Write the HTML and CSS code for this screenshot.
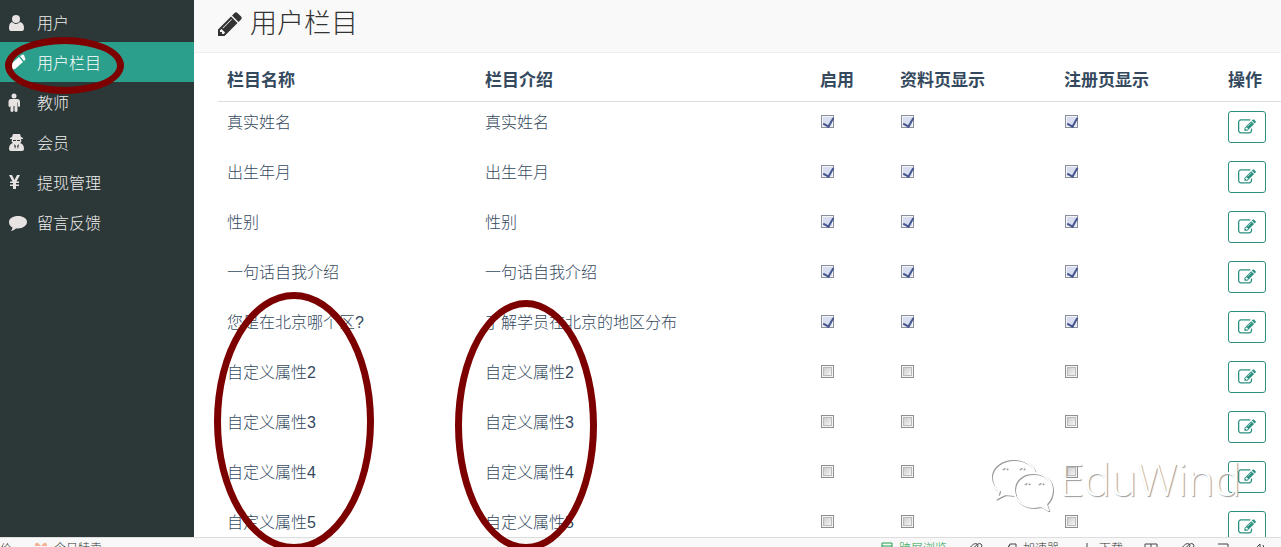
FILE: index.html
```html
<!DOCTYPE html>
<html lang="zh-CN">
<head>
    <meta charset="UTF-8">
    <meta name="viewport" content="width=device-width, initial-scale=1.0">
    <title>用户栏目</title>
    <link rel="stylesheet" href="styles.css">
</head>
<body>

    <svg class="sprite" aria-hidden="true">
        <symbol id="pencil" viewBox="0 0 1536 1536">
            <path d="M363 1408l91-91-235-235-91 91v107h128v128h107zM886 480q0-22-22-22-10 0-17 7l-542 542q-7 7-7 17 0 22 22 22 10 0 17-7l542-542q7-7 7-17zM832 288l416 416-832 832h-416v-416zM1515 384q0 53-37 90l-166 166-416-416 166-165q36-38 90-38 53 0 91 38l235 234q37 39 37 91z"/>
        </symbol>
        <symbol id="edit" viewBox="0 0 1792 1792">
            <path d="M888 1184l116-116-152-152-116 116v56h96v96h56zM1328 464q-16-16-33 1l-350 350q-17 17-1 33t33-1l350-350q17-17 1-33zM1408 1058v190q0 119-84.5 203.5t-203.5 84.5h-832q-119 0-203.5-84.5t-84.5-203.5v-832q0-119 84.5-203.5t203.5-84.5h832q63 0 117 25 15 7 18 23 3 17-9 29l-49 49q-14 14-32 8-23-6-45-6h-832q-66 0-113 47t-47 113v832q0 66 47 113t113 47h832q66 0 113-47t47-113v-126q0-13 9-22l64-64q15-15 35-7t20 29zM1312 320l288 288-672 672h-288v-288zM1756 452l-92 92-288-288 92-92q28-28 68-28t68 28l152 152q28 28 28 68t-28 68z"/>
        </symbol>
    </svg>

    <div class="app">
        <nav class="sidebar">
            <a href="#">
                <svg viewBox="0 0 20 20"><circle cx="8" cy="6" r="4"/><path d="M4 9q4 4 8 0 4 1 4 6 0 3-2 3H3q-2 0-2-3 0-5 3-6z"/></svg>
                用户
            </a>
            <a href="#" class="active">
                <svg viewBox="0 0 20 20"><path d="M2 17l1-6 8-7 4 5-8 7zM12 3l2-1q1-1 2 0l1 3q1 1 0 2l-1 1z"/></svg>
                用户栏目
            </a>
            <a href="#">
                <svg viewBox="0 0 20 20"><circle cx="6" cy="3" r="2.5"/><path d="M3 6h6q3 0 3 3v4q-1 2-2 0V9.500H9.500V18q-1.500 2-3 0v-5h-1v5q-1.500 2-3 0V9.500H2.500V13q-1 2-2 0V9q0-3 2.500-3z"/></svg>
                教师
            </a>
            <a href="#">
                <svg viewBox="0 0 20 20"><path fill-rule="evenodd" d="M5 1h7l1 3 2 1v1h-2q1 3-1 4 4 1 4 6 0 2-2 2H3q-2 0-2-2 0-5 4-6-2-1-1-4H2V5l2-1zM5 7v1h3V7zM9 7v1h3V7zM6 11l1 5 1-3zM11 11l-2 2 1 3z"/></svg>
                会员
            </a>
            <a href="#">
                <svg viewBox="0 0 20 20"><path d="M1 2h3l2.500 5L9 2h3L8.500 8.500H11V10H8v1.500h3V13H8v3H5v-3H2v-1.500h3V10H2V8.500h2.500z"/></svg>
                提现管理
            </a>
            <a href="#">
                <svg viewBox="0 0 20 20"><path d="M10 3c5 0 9 2.500 9 6s-4 6.500-9 6.500h-2q-2 2-5.500 2.500 2-1.500 2-3.500Q1 12.500 1 9c0-3.500 4-6 9-6z"/></svg>
                留言反馈
            </a>
        </nav>

        <main class="content">
            <header class="page-header">
                <svg><use href="#pencil"/></svg>
                <h1>用户栏目</h1>
            </header>

            <table class="fields">
                <colgroup>
                    <col class="col-name">
                    <col>
                    <col class="col-enable">
                    <col class="col-show">
                    <col class="col-show">
                    <col class="col-action">
                </colgroup>
                <thead>
                    <tr>
                        <th>栏目名称</th>
                        <th>栏目介绍</th>
                        <th>启用</th>
                        <th>资料页显示</th>
                        <th>注册页显示</th>
                        <th>操作</th>
                    </tr>
                </thead>
                <tbody id="fieldRows"></tbody>
            </table>

            <div class="watermark">
                <svg viewBox="0 0 66 54">
                    <path d="M25 2C12 2 2 10 2 20c0 7 3 11 8 14l-2 7 8-4 9 1h2"/>
                    <path d="M25 2c11 0 19 6 21 14"/>
                    <path d="M44 16c-11 0-19 7-19 17s9 17 20 17l7-1 7 4-2-6c4-4 6-8 6-14 0-10-8-17-19-17z"/>
                    <path d="M13 12q3-4 5 0M30 12q3-4 5 0M35 27q3-4 5 0M49 27q3-4 5 0"/>
                </svg>
                <span>EduWind</span>
            </div>
        </main>
    </div>

    <footer class="statusbar">
        <div class="status-group">
            <span>价</span>
            <svg class="gift" viewBox="0 0 16 16"><path d="M1 5h14v3H1zM2 9h12v6H2zM2 4q0-4 3-3l3 3 3-3q3-1 3 3z"/></svg>
            <span>今日特卖</span>
        </div>
        <div class="status-group tools">
            <span class="green"><svg viewBox="0 0 16 16"><path d="M3 1h10v14H3zM3 4h10"/></svg>跨屏浏览</span>
            <svg viewBox="0 0 16 16"><path d="M2 7q5-7 8-5t-4 9M6 7q5-7 8-5t-4 9"/></svg>
            <span><svg viewBox="0 0 16 16"><path d="M2 9l5-6M7 2h6v5l-6 6-4-4z"/></svg>加速器</span>
            <span><svg class="arrow" viewBox="0 0 16 16"><path d="M8 1v12M4 9l4 4 4-4"/></svg>下载</span>
            <svg viewBox="0 0 16 16"><path d="M2 2h12v11H2zM8 2v11M2 7h12"/></svg>
            <svg viewBox="0 0 16 16"><path d="M2 7q5-7 8-5t-4 9M6 7q5-7 8-5t-4 9"/></svg>
            <svg viewBox="0 0 16 16"><path d="M3 2h10v10"/></svg>
            <svg viewBox="0 0 16 16"><path d="M2 6h3l4-4v12l-4-4H2zM12 3q3 5 0 9"/></svg>
        </div>
    </footer>

    <!-- hand-drawn marks over the page -->
    <div class="mark mark-menu"></div>
    <div class="mark mark-name"></div>
    <div class="mark mark-intro"></div>

    <script>
        const fields = [
            { name: "真实姓名", intro: "真实姓名", on: true },
            { name: "出生年月", intro: "出生年月", on: true },
            { name: "性别", intro: "性别", on: true },
            { name: "一句话自我介绍", intro: "一句话自我介绍", on: true },
            { name: "您是在北京哪个区?", intro: "了解学员在北京的地区分布", on: true },
            { name: "自定义属性2", intro: "自定义属性2", on: false },
            { name: "自定义属性3", intro: "自定义属性3", on: false },
            { name: "自定义属性4", intro: "自定义属性4", on: false },
            { name: "自定义属性5", intro: "自定义属性5", on: false }
        ];

        function checkCell(field, label) {
            return `<td><input type="checkbox" aria-label="${field.name} ${label}" ${field.on ? "checked" : ""}></td>`;
        }

        // Fill the table
        document.getElementById("fieldRows").innerHTML = fields.map(field => `
            <tr>
                <td>${field.name}</td>
                <td>${field.intro}</td>
                ${checkCell(field, "启用")}
                ${checkCell(field, "资料页显示")}
                ${checkCell(field, "注册页显示")}
                <td><button type="button" class="edit-btn" aria-label="编辑"><svg><use href="#edit"/></svg></button></td>
            </tr>`).join("");
    </script>
</body>
</html>
```
FILE: styles.css
```css
* {
    box-sizing: border-box;
}
body {
    margin: 0;
    height: 100vh;
    display: flex;
    flex-direction: column;
    position: relative;
    overflow: hidden;
    background: #fff;
    color: #34495e;
    font-family: "Liberation Sans", "Noto Sans CJK SC", sans-serif;
    font-size: 16px;
    font-weight: 300;
    line-height: 24px;
}
.sprite {
    display: none;
}
.app {
    flex: 1;
    min-height: 0;
    display: flex;
    overflow: hidden;
}

/* sidebar */
.sidebar {
    flex: none;
    width: 194px;
    padding-top: 2px;
    background: #2c3737;
}
.sidebar a {
    display: flex;
    align-items: center;
    gap: 9px;
    height: 40px;
    padding: 4px 0 0 8px;
    color: #eee;
    text-decoration: none;
}
.sidebar a.active {
    background: #2c9f8c;
    color: #fff;
}
.sidebar svg {
    width: 20px;
    height: 20px;
    margin-bottom: 2px;
    fill: #e8e3e3;
}
.sidebar .active svg {
    fill: #fff;
}

/* content */
.content {
    flex: 1;
    min-width: 0;
    position: relative;
}
.page-header {
    display: flex;
    align-items: center;
    gap: 8px;
    height: 53px;
    padding: 0 24px 4px;
    background: #f9f9f9;
    border-bottom: 1px solid #eee;
}
.page-header svg {
    width: 24px;
    height: 24px;
    fill: #333;
}
.page-header h1 {
    margin: 0;
    color: #333;
    font-size: 27px;
    font-weight: 300;
    line-height: 32px;
}
.fields {
    width: calc(100% - 24px);
    margin-left: 24px;
    table-layout: fixed;
    border-collapse: collapse;
}
.col-name {
    width: 258px;
}
.col-enable {
    width: 80px;
}
.col-show {
    width: 164px;
}
.col-action {
    width: 62px;
}
.fields th {
    height: 48px;
    padding: 8px 0 0 9px;
    border-bottom: 1px solid #ddd;
    font-size: 17px;
    font-weight: bold;
    text-align: left;
    white-space: nowrap;
}
.fields td {
    height: 50px;
    padding: 9px 0 9px 9px;
    vertical-align: top;
}
.fields input {
    appearance: none;
    display: block;
    width: 13px;
    height: 13px;
    margin: 4px 1px;
    border: 1px solid #8e8f8f;
    background: linear-gradient(135deg, #c4c4c4, #fff);
    box-shadow: inset 0 0 0 1px #f4f4f4, inset 0 0 0 2px #bbb;
}
.fields input:checked {
    position: relative;
    border-color: #8a8fa0;
    background: #d8def0;
    box-shadow: inset 0 0 0 1px #f4f4f4;
}
.fields input:checked::after {
    content: "";
    position: absolute;
    left: 3px;
    top: 0;
    width: 5px;
    height: 9px;
    border: solid #46568f;
    border-width: 0 2px 2px 0;
    transform: rotate(30deg);
}
.edit-btn {
    display: flex;
    align-items: center;
    justify-content: center;
    width: 38px;
    height: 32px;
    padding: 0;
    border: 1px solid #2b9080;
    border-radius: 3px;
    background: #fff;
    cursor: pointer;
}
.edit-btn svg {
    width: 18px;
    height: 18px;
    fill: #2b9080;
}

/* watermark */
.watermark {
    position: absolute;
    right: 40px;
    bottom: 26px;
    display: flex;
    align-items: center;
    gap: 4px;
    color: #fff;
    font-family: "Open Sans", sans-serif;
    font-size: 45px;
    font-weight: 300;
    line-height: 46px;
    text-shadow: 1px 1px 1px #999;
    pointer-events: none;
}
.watermark span {
    padding-bottom: 9px;
}
.watermark svg {
    width: 66px;
    height: 54px;
    fill: none;
    stroke: #fff;
    stroke-width: 2;
    filter: drop-shadow(1px 1px 0 #999);
}

/* status bar, only its top edge is in view */
.statusbar {
    flex: none;
    height: 10px;
    display: flex;
    align-items: flex-start;
    justify-content: space-between;
    overflow: hidden;
    padding: 0 14px 0 0;
    background: #f8f8f8;
    border-top: 1px solid #ddd;
    color: #333;
    font-size: 12px;
    line-height: 22px;
}
.status-group {
    display: flex;
    gap: 5px;
}
.status-group.tools {
    gap: 20px;
}
.status-group span {
    display: flex;
    gap: 4px;
}
.statusbar svg {
    width: 16px;
    height: 16px;
    margin-top: 4px;
    fill: none;
    stroke: #444;
}
.statusbar .gift {
    margin-left: 16px;
    fill: #f3b093;
    stroke: none;
}
.statusbar .green {
    color: #1ba04c;
}
.statusbar .green svg {
    stroke: #1ba04c;
}

/* red ovals */
.mark {
    position: absolute;
    border: 7px solid #7d0000;
    border-radius: 50%;
    pointer-events: none;
}
.mark-menu {
    left: 5px;
    top: 37px;
    width: 119px;
    height: 57px;
}
.mark-name {
    left: 214px;
    top: 292px;
    width: 160px;
    height: 259px;
}
.mark-intro {
    left: 455px;
    top: 300px;
    width: 142px;
    height: 251px;
}
```
